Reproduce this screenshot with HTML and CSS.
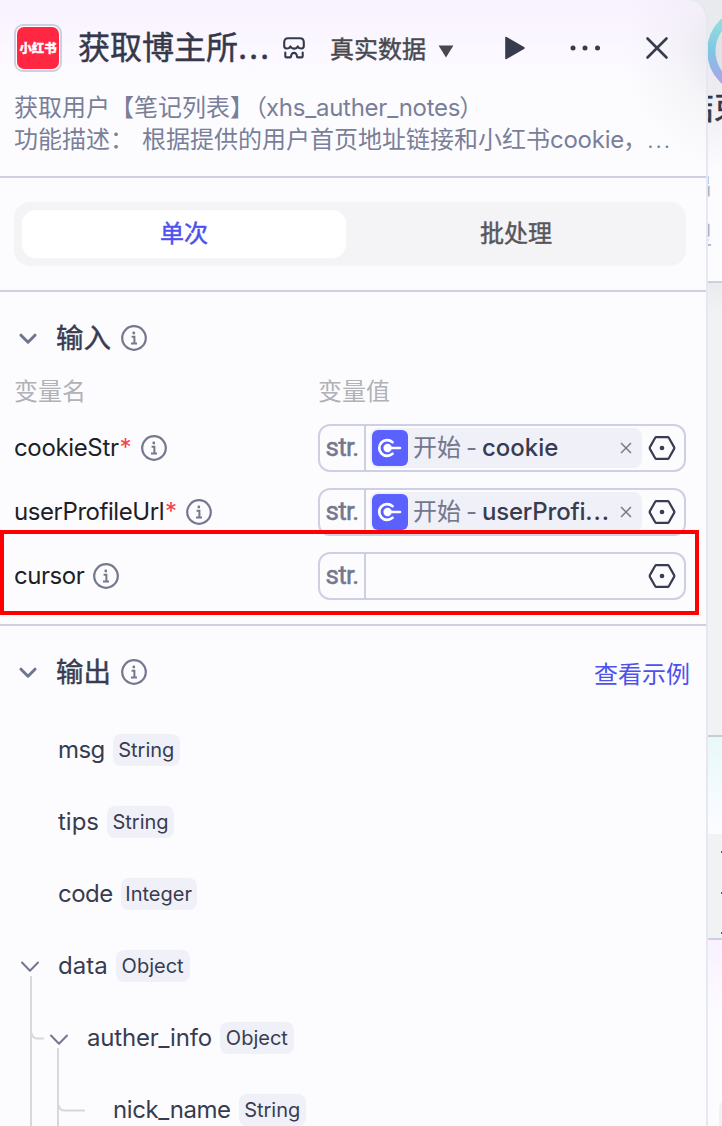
FILE: index.html
```html
<!DOCTYPE html>
<html lang="zh-CN">
<head>
<meta charset="utf-8">
<title>节点配置</title>
<link rel="stylesheet" href="styles.css">
</head>
<body>
<svg class="defs" width="0" height="0">
  <symbol id="info" viewBox="0 0 26 26"><circle cx="13" cy="13" r="11.8" fill="none" stroke="currentColor" stroke-width="2.2"/><circle cx="12.8" cy="8" r="1.4" fill="currentColor"/><path d="M10.6 11.8h2.8v6.6M10 18.6h6" fill="none" stroke="currentColor" stroke-width="2"/></symbol>
  <symbol id="chev" viewBox="0 0 18 12"><path d="M2 2.2l7 7 7-7" fill="none" stroke="currentColor" stroke-width="3" stroke-linecap="round" stroke-linejoin="round"/></symbol>
  <symbol id="chev-thin" viewBox="0 0 18 12"><path d="M1 1.5l8 8.2 8-8.2" fill="none" stroke="currentColor" stroke-width="2" stroke-linecap="round" stroke-linejoin="round"/></symbol>
  <symbol id="hex" viewBox="0 0 28 26"><path d="M8.4 2.1h11.2q.8 0 1.200.7l5.300 9.300q.5.9 0 1.800l-5.300 9.300q-.4.7-1.200.7H8.400q-.8 0-1.200-.7L1.900 13.900q-.5-.9 0-1.800l5.300-9.300q.4-.7 1.200-.7z" fill="none" stroke="currentColor" stroke-width="2.200"/><circle cx="14" cy="13" r="2.300" fill="currentColor"/></symbol>
  <symbol id="start" viewBox="0 0 36 36"><path d="M20.500 12.200A7.900 7.900 0 1 0 20.500 23.800" fill="none" stroke="#fff" stroke-width="2.700" stroke-linecap="round"/><circle cx="15.600" cy="18" r="4.200" fill="#fff"/><path d="M16 18h12" stroke="#fff" stroke-width="2.700" stroke-linecap="round"/></symbol>
  <symbol id="close" viewBox="0 0 14 14"><path d="M2 2l10 10M12 2L2 12" stroke="currentColor" stroke-width="1.5"/></symbol>
</svg>
<div class="stage">
  <main class="panel">
    <header class="head">
      <div class="title-row">
        <div class="logo"><span>小红书</span></div>
        <h1>获取博主所<span class="dots">...</span></h1>
        <svg class="shop" width="22" height="22" viewBox="0 0 22 22" fill="none" stroke="#35394d" stroke-width="2.1" stroke-linejoin="round" stroke-linecap="round"><path d="M1.2 9V5.5Q1.2 1.3 5 1.3h12q3.8 0 3.8 4.2V9c0 3-4.2 3.6-6 .4-1.4 3-5.900 3-7.400 0C5.600 12.600 1.200 12 1.200 9z"/><path d="M2.300 15.500v3.700q0 1.200 1.200 1.200H7q1.100 0 1.100-1.200c0-4.400 5.800-4.400 5.800 0 0 .8.400 1.200 1.200 1.200h3.400q1.200 0 1.200-1.200v-3.700"/></svg>
        <div class="mode">真实数据</div>
        <svg class="caret" width="16" height="13" viewBox="0 0 16 13"><path d="M.6.500h14.800L8 12.500z" fill="#48484d"/></svg>
        <svg class="play" width="22" height="24" viewBox="0 0 22 24"><path d="M1.200 1.800q0-1.600 1.500-.8l17.300 10q1.500 1 0 2L2.700 23q-1.500.8-1.500-.8z" fill="#363b4e"/></svg>
        <svg class="more" width="32" height="8" viewBox="0 0 32 8" fill="#363b4e"><circle cx="4" cy="4" r="2.500"/><circle cx="16" cy="4" r="2.500"/><circle cx="28.500" cy="4" r="2.500"/></svg>
        <svg class="x" width="24" height="24" viewBox="0 0 24 24"><path d="M2.500 2.500l19 19M21.500 2.500l-19 19" stroke="#363b4e" stroke-width="2.600" stroke-linecap="round"/></svg>
      </div>
      <div class="desc"><div>获取用户【笔记列表】<span class="paren">（</span><span class="api">xhs_auther_notes</span><span class="paren-end">）</span></div><div>功能描述：<span class="gap"></span>根据提供的用户首页地址链接和小红书<span class="ck">cookie</span><span class="comma">，</span><span class="end">...</span></div></div>
    </header>
    <section class="tabs"><div class="seg"><div class="tab on">单次</div><div class="tab">批处理</div></div></section>
    <section class="inputs">
      <div class="sec-title"><svg class="chev"><use href="#chev"/></svg><h2>输入</h2><svg class="info"><use href="#info"/></svg></div>
      <div class="cols"><span>变量名</span><span>变量值</span></div>
      <div class="row"><div class="name"><span class="n1">cookieStr</span><b>*</b><svg class="info"><use href="#info"/></svg></div>
        <div class="field"><span class="type">str.</span><div class="val"><div class="chip"><svg class="start"><use href="#start"/></svg><span class="src">开始</span><span class="dash">-</span><strong class="v1">cookie</strong><svg class="del"><use href="#close"/></svg></div><svg class="hex"><use href="#hex"/></svg></div></div></div>
      <div class="row"><div class="name"><span class="n2">userProfileUrl</span><b>*</b><svg class="info"><use href="#info"/></svg></div>
        <div class="field"><span class="type">str.</span><div class="val"><div class="chip"><svg class="start"><use href="#start"/></svg><span class="src">开始</span><span class="dash">-</span><strong class="v2">userProfi<span class="vd">...</span></strong><svg class="del"><use href="#close"/></svg></div><svg class="hex"><use href="#hex"/></svg></div></div></div>
      <div class="row"><div class="name"><span class="n3">cursor</span><svg class="info"><use href="#info"/></svg></div>
        <div class="field"><span class="type">str.</span><div class="val"><svg class="hex"><use href="#hex"/></svg></div></div></div>
      <div class="highlight"></div>
    </section>
    <section class="outputs">
      <div class="sec-title"><svg class="chev"><use href="#chev"/></svg><h2>输出</h2><svg class="info"><use href="#info"/></svg><a>查看示例</a></div>
      <div class="tree">
        <div class="node msg"><span>msg</span><em>String</em></div>
        <div class="node tips"><span>tips</span><em>String</em></div>
        <div class="node code"><span>code</span><em class="int">Integer</em></div>
        <div class="node data"><svg class="tc"><use href="#chev-thin"/></svg><span>data</span><em class="obj">Object</em></div>
        <div class="node lvl2"><svg class="tc"><use href="#chev-thin"/></svg><span>auther_info</span><em class="obj">Object</em></div>
        <div class="node lvl3"><span>nick_name</span><em>String</em></div>
        <svg class="lines" width="66" height="150" viewBox="0 0 66 150" fill="none" stroke="#d8d8da" stroke-width="2"><path d="M11 0v150M11.500 57q1 5.500 6 5.500H24M38 72v78M38.500 129q1 5.500 6 5.500H65"/></svg>
      </div>
    </section>
  </main>
  <aside class="canvas">
    <div class="card c1"><div class="ring"></div><div class="cname">结束</div><div class="sub s1">出</div><div class="sub s2">型</div></div>
    <div class="space"></div>
    <div class="card c2"><i></i><i></i><i></i></div>
    <div class="card c3"><div class="nub"></div></div>
  </aside>
</div>
</body>
</html>
```
FILE: styles.css
```css
* { box-sizing: border-box; }
body { margin: 0; font-family: Inter, "Noto Sans CJK SC", sans-serif; color: #383c50; }
svg { flex: none; display: block; }
.defs { position: absolute; }
.stage { width: 722px; height: 1126px; display: flex; overflow: hidden; background: #f1f2f4; position: relative; }
.panel { width: 708px; height: 1126px; flex: none; overflow: hidden; position: relative; z-index: 1; border-right: 2px solid #e5e7f1; border-top-right-radius: 20px;
  background: radial-gradient(circle 112px at 735px 55px, rgba(208,208,214,.5), rgba(225,225,230,.25) 50%, rgba(252,252,255,0)), linear-gradient(#f9f1ff, #fcfcff 78px); }
.head { height: 178px; border-bottom: 2px solid #cdd0e2; }
.title-row { display: flex; align-items: center; height: 96px; padding-left: 14px; }
.logo { width: 48px; height: 48px; border: 2px solid #cdd0e2; border-radius: 9px; background: #fff; padding: 1px; flex: none; }
.logo span { display: flex; align-items: center; justify-content: center; height: 42px; border-radius: 7px; background: #ff2742; color: #fff; font: 900 12.4px/42px "Noto Sans CJK SC", sans-serif; -webkit-text-stroke: .3px #fff; white-space: nowrap; }
h1 { margin: 0 0 0 16px; width: 192px; flex: none; font-size: 32px; line-height: 48px; font-weight: 400; -webkit-text-stroke: .45px currentColor; white-space: nowrap; color: #35384a; }
h1 .dots { letter-spacing: 1.8px; }
.shop { margin-left: 13px; }
.mode { margin-left: 25px; width: 97px; font-size: 24px; line-height: 36px; color: #48484d; -webkit-text-stroke: .45px currentColor; white-space: nowrap; margin-top: 3px; }
.caret { margin-left: 11px; margin-top: 7px; }
.play { margin-left: 50px; }
.more { margin-left: 43px; }
.x { margin-left: 44px; }
.desc { padding: 0 0 0 14px; margin-top: -4px; font-size: 24px; line-height: 32px; color: #7a7f99; white-space: nowrap; }
.api { letter-spacing: -.25px; }
.paren { margin-left: 1px; margin-right: -1px; }
.paren-end { margin-left: -1px; }
.ck { letter-spacing: -.25px; }
.comma { margin-left: -1px; }
.end { letter-spacing: 1.5px; font-weight: 300; }
.gap { display: inline-block; width: 8px; }
.outputs, .inputs { position: relative; }
.tabs { height: 114px; padding: 24px 0 0 14px; border-bottom: 2px solid #cdd0e2; }
.seg { width: 672px; height: 64px; padding: 8px; border-radius: 16px; background: #f4f4f6; display: flex; }
.tab { width: 324px; height: 48px; line-height: 48px; text-align: center; border-radius: 14px; font-size: 24px; color: #56565c; -webkit-text-stroke: .45px currentColor; }
.tab + .tab { margin-left: 8px; }
.tab.on { background: #fff; color: #4e51ee; }
.inputs { height: 334px; border-bottom: 2px solid #cdd0e2; padding-top: 22px; }
.sec-title { height: 48px; display: flex; align-items: center; padding-left: 19px; }
.chev { width: 18px; height: 12px; color: #6f748f; margin-top: 2px; }
h2 { margin: 0 0 0 19px; width: 55px; font-size: 27.5px; line-height: 40px; font-weight: 400; -webkit-text-stroke: .45px currentColor; white-space: nowrap; }
.info { width: 26px; height: 26px; color: #73788f; margin-left: 10px; }
.cols { display: flex; height: 52px; line-height: 60px; padding-left: 14px; font-size: 24px; color: #b1b1b6; }
.cols span { width: 304px; }
.row { display: flex; align-items: center; height: 48px; margin: 10px 0 16px 14px; }
.row + .row { margin-top: 0; }
.name { width: 304px; display: flex; align-items: center; font-size: 24px; line-height: 48px; color: #1e2026; letter-spacing: -.35px; }
.n2 { letter-spacing: -.44px; }
.n3 { letter-spacing: -.45px; margin-right: -1px; }
.name b { color: #f53f4f; font-weight: 400; width: 11px; text-align: center; margin-left: 1px; }
.field { width: 368px; height: 48px; border: 2px solid #cdd0e2; border-radius: 12px; display: flex; }
.type { width: 46px; border-right: 2px solid #cdd0e2; font: 26px/43px "Roboto", sans-serif; -webkit-text-stroke: .5px currentColor; text-align: center; color: #73788f; letter-spacing: -.8px; }
.val { flex: 1; display: flex; align-items: center; justify-content: flex-end; padding-right: 8px; }
.chip { width: 272px; height: 40px; border-radius: 8px; background: #f0f0f9; margin-right: 6px; display: flex; align-items: center; padding-left: 2px; font-size: 24px; line-height: 40px; }
.start { width: 36px; height: 36px; border-radius: 6px; background: #5b61ff; }
.src { margin-left: 5px; width: 47px; color: #73788f; white-space: nowrap; -webkit-text-stroke: .1px currentColor; }
.dash { margin-left: 6px; width: 11px; color: #73788f; }
.chip strong { margin-left: 5px; font-weight: 500; white-space: nowrap; }
.v2 { letter-spacing: -.2px; }
.vd { letter-spacing: 1px; }
.del { width: 14px; height: 14px; margin-left: auto; margin-right: 9px; color: #777b8b; }
.hex { width: 28px; height: 26px; color: #383c50; }
.highlight { position: absolute; left: 0; top: 238px; width: 699px; height: 85px; border: 4px solid #f00; }
.outputs { padding-top: 22px; }
.outputs a { margin-left: auto; margin-right: 16px; font-size: 24px; color: #4e51ee; }
.tree { position: relative; padding-top: 18px; }
.node { display: flex; align-items: center; height: 72px; padding-left: 58px; font-size: 24px; line-height: 30px; position: relative; letter-spacing: -.4px; }
.node.tips, .node.data { letter-spacing: 0; }
.node.msg, .node.code { letter-spacing: -.55px; }
.node em { font-style: normal; font-size: 20px; line-height: 32px; height: 32px; width: 67px; text-align: center; border-radius: 8px; background: #f0f0f9; margin-left: 8px; letter-spacing: 0; }
.node em.int { width: 76px; }
.node em.obj { width: 74px; }
.tc { width: 18px; height: 12px; margin: 2px 19px 0 -37px; color: #73788f; }
.lvl2 .tc { margin-top: 4px; }
.node.lvl2 { padding-left: 87px; letter-spacing: -.2px; }
.lvl3 { padding-left: 113px; }
.lines { position: absolute; left: 20px; top: 280px; }
.canvas { width: 34px; margin-left: -20px; flex: none; display: flex; flex-direction: column; }
.card { position: relative; overflow: hidden; background: #fcfcff; border-bottom: 2px solid #cdd0e2; }
.c1 { height: 283px; background: linear-gradient(#e9eaed, #ececf1 90px, #fcfcff 170px); }
.c2 { height: 205px; border-top: 2px solid #c9ccd8; background: linear-gradient(#e8f8f8, #f6fbff 65px, #fcfcff 97px, #f1f2f4 97px); }
.c3 { flex: 1; border: 0; background: linear-gradient(#f9f1ff, #fcfcff 80px); }
.space { height: 452px; background: linear-gradient(#e9ebee, #f1f2f4 30px); }
.ring { position: absolute; left: 19px; top: 8px; width: 86px; height: 86px; border-radius: 50%; background: radial-gradient(circle, #e1e2e6 34px, transparent 35px), linear-gradient(#8fdcdf 20%, #7fc6e2 50%, #a9a4ec 85%); }
.cname { position: absolute; left: -6px; top: 86px; font-size: 32px; line-height: 44px; white-space: nowrap; -webkit-text-stroke: .6px #35384a; color: #35384a; }
.sub { position: absolute; left: 0; width: 24px; font-size: 24px; line-height: 36px; color: #afb2c8; }
.s1 { top: 168px; }
.s2 { top: 218px; }
.c2 i { position: absolute; left: 33px; top: 114px; width: 2px; height: 2px; background: #55575f; }
.c2 i + i { top: 155px; }
.c2 i + i + i { top: 195px; }
.nub { position: absolute; left: 31px; top: 160px; width: 30px; height: 60px; border-radius: 8px; background: #f0f0f9; }
```
